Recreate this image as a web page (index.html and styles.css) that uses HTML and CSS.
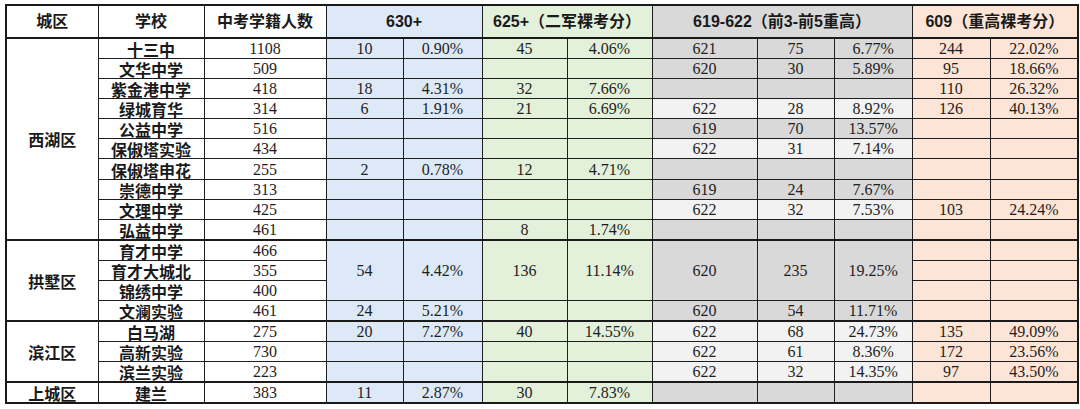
FILE: index.html
```html
<!DOCTYPE html>
<html lang="zh">
<head>
<meta charset="utf-8">
<link rel="stylesheet" href="styles.css">
</head>
<body>
<table class="sheet">
<colgroup>
<col class="w92"><col class="w106"><col class="w122"><col class="w77"><col class="w79"><col class="w85"><col class="w85"><col class="w105"><col class="w77"><col class="w78"><col class="w78"><col class="w88">
</colgroup>
<thead>
<tr class="head">
<th>城区</th><th>学校</th><th>中考学籍人数</th>
<th colspan="2" class="b">630+</th>
<th colspan="2" class="g">625+（二军裸考分）</th>
<th colspan="3" class="d">619-622（前3-前5重高）</th>
<th colspan="2" class="p">609（重高裸考分）</th>
</tr>
</thead>
<tbody>
<tr class="grp">
<td rowspan="10" class="dist">西湖区</td><td class="sch">十三中</td><td>1108</td>
<td class="b">10</td><td class="b">0.90%</td><td class="g">45</td><td class="g">4.06%</td>
<td class="d">621</td><td class="d">75</td><td class="d">6.77%</td><td class="p">244</td><td class="p">22.02%</td>
</tr>
<tr>
<td class="sch">文华中学</td><td>509</td>
<td class="b"></td><td class="b"></td><td class="g"></td><td class="g"></td>
<td class="d">620</td><td class="d">30</td><td class="d">5.89%</td><td class="p">95</td><td class="p">18.66%</td>
</tr>
<tr>
<td class="sch">紫金港中学</td><td>418</td>
<td class="b">18</td><td class="b">4.31%</td><td class="g">32</td><td class="g">7.66%</td>
<td class="d"></td><td class="d"></td><td class="d"></td><td class="p">110</td><td class="p">26.32%</td>
</tr>
<tr>
<td class="sch">绿城育华</td><td>314</td>
<td class="b">6</td><td class="b">1.91%</td><td class="g">21</td><td class="g">6.69%</td>
<td class="l">622</td><td class="l">28</td><td class="l">8.92%</td><td class="p">126</td><td class="p">40.13%</td>
</tr>
<tr>
<td class="sch">公益中学</td><td>516</td>
<td class="b"></td><td class="b"></td><td class="g"></td><td class="g"></td>
<td class="d">619</td><td class="d">70</td><td class="d">13.57%</td><td class="p"></td><td class="p"></td>
</tr>
<tr>
<td class="sch">保俶塔实验</td><td>434</td>
<td class="b"></td><td class="b"></td><td class="g"></td><td class="g"></td>
<td class="l">622</td><td class="l">31</td><td class="l">7.14%</td><td class="p"></td><td class="p"></td>
</tr>
<tr>
<td class="sch">保俶塔申花</td><td>255</td>
<td class="b">2</td><td class="b">0.78%</td><td class="g">12</td><td class="g">4.71%</td>
<td class="d"></td><td class="d"></td><td class="d"></td><td class="p"></td><td class="p"></td>
</tr>
<tr>
<td class="sch">崇德中学</td><td>313</td>
<td class="b"></td><td class="b"></td><td class="g"></td><td class="g"></td>
<td class="d">619</td><td class="d">24</td><td class="d">7.67%</td><td class="p"></td><td class="p"></td>
</tr>
<tr>
<td class="sch">文理中学</td><td>425</td>
<td class="b"></td><td class="b"></td><td class="g"></td><td class="g"></td>
<td class="l">622</td><td class="l">32</td><td class="l">7.53%</td><td class="p">103</td><td class="p">24.24%</td>
</tr>
<tr>
<td class="sch">弘益中学</td><td>461</td>
<td class="b"></td><td class="b"></td><td class="g">8</td><td class="g">1.74%</td>
<td class="d"></td><td class="d"></td><td class="d"></td><td class="p"></td><td class="p"></td>
</tr>
<tr class="grp">
<td rowspan="4" class="dist">拱墅区</td><td class="sch">育才中学</td><td>466</td>
<td rowspan="3" class="b">54</td><td rowspan="3" class="b">4.42%</td><td rowspan="3" class="g">136</td><td rowspan="3" class="g">11.14%</td>
<td rowspan="3" class="d">620</td><td rowspan="3" class="d">235</td><td rowspan="3" class="d">19.25%</td><td class="p"></td><td class="p"></td>
</tr>
<tr>
<td class="sch">育才大城北</td><td>355</td><td class="p"></td><td class="p"></td>
</tr>
<tr>
<td class="sch">锦绣中学</td><td>400</td><td class="p"></td><td class="p"></td>
</tr>
<tr>
<td class="sch">文澜实验</td><td>461</td>
<td class="b">24</td><td class="b">5.21%</td><td class="g"></td><td class="g"></td>
<td class="d">620</td><td class="d">54</td><td class="d">11.71%</td><td class="p"></td><td class="p"></td>
</tr>
<tr class="grp">
<td rowspan="3" class="dist">滨江区</td><td class="sch">白马湖</td><td>275</td>
<td class="b">20</td><td class="b">7.27%</td><td class="g">40</td><td class="g">14.55%</td>
<td class="l">622</td><td class="l">68</td><td class="l">24.73%</td><td class="p">135</td><td class="p">49.09%</td>
</tr>
<tr>
<td class="sch">高新实验</td><td>730</td>
<td class="b"></td><td class="b"></td><td class="g"></td><td class="g"></td>
<td class="l">622</td><td class="l">61</td><td class="l">8.36%</td><td class="p">172</td><td class="p">23.56%</td>
</tr>
<tr>
<td class="sch">滨兰实验</td><td>223</td>
<td class="b"></td><td class="b"></td><td class="g"></td><td class="g"></td>
<td class="l">622</td><td class="l">32</td><td class="l">14.35%</td><td class="p">97</td><td class="p">43.50%</td>
</tr>
<tr class="grp">
<td class="dist">上城区</td><td class="sch">建兰</td><td>383</td>
<td class="b">11</td><td class="b">2.87%</td><td class="g">30</td><td class="g">7.83%</td>
<td class="d"></td><td class="d"></td><td class="d"></td><td class="p"></td><td class="p"></td>
</tr>
</tbody>
</table>
</body>
</html>
```
FILE: styles.css
```css
html, body {
  margin: 0;
  padding: 0;
  background: #ffffff;
}
body {
  padding: 4px 0 0 5px;
  font-family: "Liberation Serif", "Noto Sans CJK SC", serif;
  color: #1e1e1e;
}
.sheet {
  border-collapse: collapse;
  table-layout: fixed;
  width: 1072px;
  border: 2px solid #1a1a1a;
}
.w92 { width: 92px; }
.w106 { width: 106px; }
.w122 { width: 122px; }
.w77 { width: 77px; }
.w79 { width: 79px; }
.w85 { width: 85px; }
.w105 { width: 105px; }
.w78 { width: 78px; }
.w88 { width: 88px; }
.sheet th, .sheet td {
  border: 1px solid #1e1e1e;
  padding: 0;
  text-align: center;
  vertical-align: middle;
  white-space: nowrap;
}
.sheet th {
  height: 31px;
  line-height: 20px;
  font-family: "Liberation Sans", "Noto Sans CJK SC", sans-serif;
  font-weight: bold;
  font-size: 16px;
  color: #1a1a1a;
}
.sheet td {
  height: 18.08px;
  line-height: 18px;
  font-size: 16px;
  padding-top: 1px;
}
.sheet thead tr th {
  border-bottom: 2px solid #1a1a1a;
}
.sheet tr.grp td {
  border-top: 2px solid #1a1a1a;
}
.sheet td.sch, .sheet td.dist {
  font-family: "Noto Sans CJK SC", sans-serif;
  font-weight: bold;
  font-size: 16px;
  line-height: 18px;
  color: #1a1a1a;
}
.b { background: #dde9f7; }
.g { background: #e3f0da; }
.d { background: #d9d9d9; }
.l { background: #f2f2f2; }
.p { background: #fce4d6; }
```
